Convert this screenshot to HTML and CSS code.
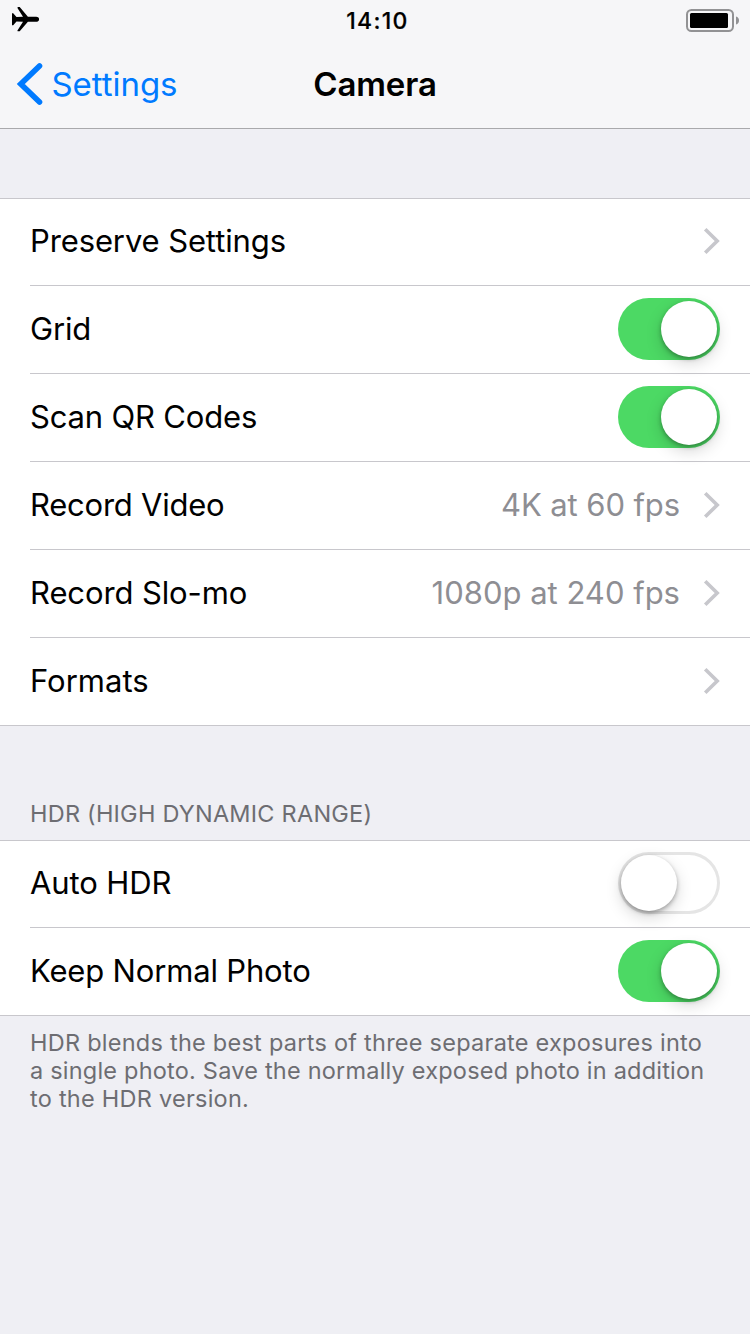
FILE: index.html
```
<!DOCTYPE html>
<html lang="en">
<head>
<meta charset="utf-8">
<title>Camera</title>
<link rel="stylesheet" href="styles.css">
</head>
<body>
<svg class="defs" width="0" height="0" aria-hidden="true">
  <symbol id="chevron" viewBox="0 0 17 28"><path d="M2.200 2.200 14.200 14 2.200 25.800" fill="none" stroke="#c7c7cc" stroke-width="3.600"/></symbol>
</svg>
<header class="header">
  <div class="status">
    <svg class="plane" viewBox="0 0 27 25"><path d="M0 6.200h1.200l3.300 3.700 6.500-.2L5.600 1.200C5.200.5 5.500.1 6.200.1h1.500l8.200 9.600h8.300c1.800 0 2.900 1.100 2.900 2.500s-1.100 2.500-2.900 2.500h-8.300l-8.200 9.600H6.200c-.7 0-1-.4-.6-1.100L11 14.700l-6.500-.2-3.300 3.700H0z"/></svg>
    <span class="clock">14:10</span>
    <svg class="battery" viewBox="0 0 54 24"><rect x="1" y="1" width="46" height="21" rx="4.500" fill="none" stroke="#929294" stroke-width="2"/><rect x="4" y="4" width="38" height="15" rx="1.500"/><path d="M50 7.500c2 .6 3 2 3 4s-1 3.400-3 4z" fill="#929294"/></svg>
  </div>
  <nav class="nav">
    <a class="back"><svg class="back-icon" viewBox="0 0 28 44"><path d="M23.500 4 4.800 22l18.700 18" fill="none" stroke="#007aff" stroke-width="5.600" stroke-linecap="round" stroke-linejoin="miter"/></svg><span class="back-text">Settings</span></a>
    <h1 class="title">Camera</h1>
  </nav>
</header>
<main>
  <section class="group group-main">
    <div class="row"><span class="label preserve">Preserve Settings</span><svg class="chevron"><use href="#chevron"/></svg></div>
    <div class="row"><span class="label grid">Grid</span><span class="switch on"><i class="knob"></i></span></div>
    <div class="row"><span class="label scan">Scan QR Codes</span><span class="switch on"><i class="knob"></i></span></div>
    <div class="row"><span class="label video">Record Video</span><span class="value video-value">4K at 60 fps</span><svg class="chevron"><use href="#chevron"/></svg></div>
    <div class="row"><span class="label slomo">Record Slo-mo</span><span class="value slomo-value">1080p at 240 fps</span><svg class="chevron"><use href="#chevron"/></svg></div>
    <div class="row"><span class="label formats">Formats</span><svg class="chevron"><use href="#chevron"/></svg></div>
  </section>
  <h2 class="caption">HDR (HIGH DYNAMIC RANGE)</h2>
  <section class="group">
    <div class="row"><span class="label auto">Auto HDR</span><span class="switch"><i class="knob"></i></span></div>
    <div class="row"><span class="label keep">Keep Normal Photo</span><span class="switch on"><i class="knob"></i></span></div>
  </section>
  <p class="footnote"><span class="note1">HDR blends the best parts of three separate exposures into</span><br><span class="note2">a single photo. Save the normally exposed photo in addition</span><br><span class="note3">to the HDR version.</span></p>
</main>
</body>
</html>
```
FILE: styles.css
```
* { box-sizing: border-box; }
body {
  margin: 0;
  width: 750px;
  height: 1334px;
  overflow: hidden;
  background: #efeff4;
  color: #000;
  font-family: Inter, "Liberation Sans", sans-serif;
}
.defs { display: block; }
.header {
  height: 129px;
  background: #f6f6f8;
  border-bottom: 1px solid #a9a9ac;
}
.status {
  display: grid;
  grid-template-columns: 1fr auto 1fr;
  align-items: center;
  height: 40px;
  padding: 0 10px 0 12px;
}
.plane { width: 27px; height: 25px; margin-top: -1px; }
.clock { padding: 2px 0 0 3px; font-size: 23px; font-weight: 500; line-height: 38px; letter-spacing: 1.3px; -webkit-text-stroke: 0.2px #000; }
.battery { width: 54px; height: 24px; justify-self: end; margin-top: 1px; }
.nav {
  display: grid;
  grid-template-columns: 1fr auto 1fr;
  align-items: center;
  height: 88px;
  padding: 0 16px;
}
.back { display: flex; align-items: center; gap: 7.500px; color: #007aff; }
.back-icon { width: 28px; height: 44px; }
.back-text { font-size: 33px; letter-spacing: -0.05px; white-space: nowrap; }
.title { margin: 0; font-size: 33px; font-weight: 600; letter-spacing: -0.1px; }
.group { background: #fff; border-top: 1px solid #c8c7cc; border-bottom: 1px solid #c8c7cc; }
.group-main { margin-top: 69px; }
.row {
  display: flex;
  align-items: center;
  height: 88px;
  margin-left: 30px;
  padding: 0 30px 1px 0;
  border-bottom: 1px solid #c8c7cc;
}
.row:first-child { height: 87px; padding-bottom: 2px; }
.row:last-child { height: 87px; border-bottom: 0; }
.label { font-size: 31px; line-height: 38px; white-space: nowrap; margin-right: auto; }
.value { font-size: 31px; line-height: 38px; color: #8e8e93; white-space: nowrap; margin-right: 23px; }
.preserve { letter-spacing: -0.12px; }
.grid { letter-spacing: -0.15px; }
.scan { letter-spacing: -0.17px; }
.video { letter-spacing: -0.24px; }
.slomo { letter-spacing: -0.12px; }
.video-value { letter-spacing: -0.1px; }
.auto { letter-spacing: -0.1px; }
.keep { letter-spacing: -0.17px; }
.chevron { width: 17px; height: 28px; flex: none; }
.switch {
  display: flex;
  flex: none;
  width: 102px;
  height: 62px;
  padding: 3px;
  border-radius: 31px;
  box-shadow: inset 0 0 0 3px #e5e5e5;
}
.switch.on { justify-content: flex-end; background: #4cd964; box-shadow: none; }
.knob {
  width: 56px;
  height: 56px;
  border-radius: 50%;
  background: #fff;
  box-shadow: 0 6px 16px rgba(0, 0, 0, 0.17), 0 2px 4px rgba(0, 0, 0, 0.3);
}
.caption {
  display: flex;
  align-items: flex-end;
  height: 114px;
  margin: 0;
  padding: 0 30px 12px;
  color: #6d6d72;
  font-size: 23.500px;
  font-weight: 400;
  line-height: 28px;
  letter-spacing: 0.23px;
}
.footnote { margin: 13px 30px 0; color: #6d6d72; font-size: 23.500px; line-height: 28px; white-space: nowrap; }
.note1 { letter-spacing: 0.25px; }
.note2 { letter-spacing: 0.21px; }
.note3 { letter-spacing: 0.25px; }
```
